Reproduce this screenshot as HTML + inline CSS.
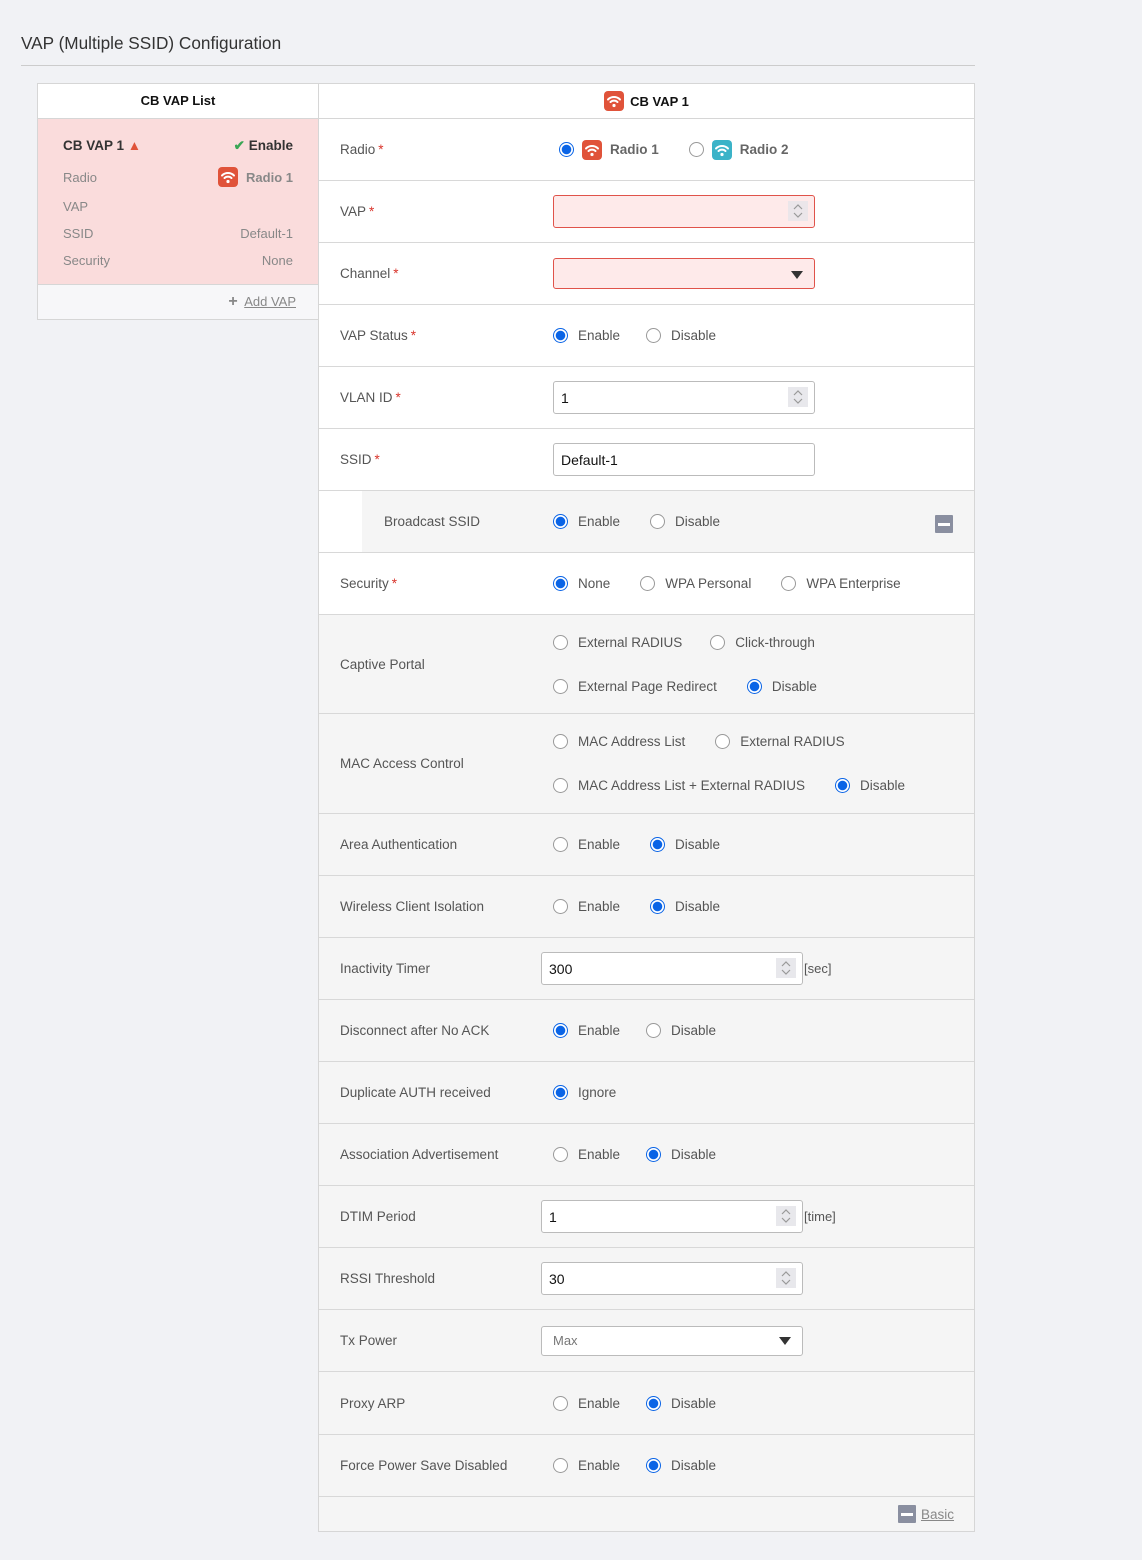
<!DOCTYPE html>
<html><head><meta charset="utf-8"><style>
*{box-sizing:border-box;margin:0;padding:0}
body{width:1142px;height:1560px;background:#f1f2f5;font-family:"Liberation Sans",sans-serif;font-size:14px;color:#555;position:relative;overflow:hidden}
.title{position:absolute;left:21px;top:33px;font-size:17.2px;color:#333}
.hr{position:absolute;left:21px;top:65px;width:954px;height:1px;background:#ccc}
.left{position:absolute;left:37px;top:83px;width:282px;height:237px;border:1px solid #d6d6d6;background:#fff}
.lh{height:35px;border-bottom:1px solid #d6d6d6;text-align:center;line-height:33px;font-weight:bold;color:#111;font-size:13px}
.pink{height:166px;background:#fadcdc;border-bottom:1px solid #d6d6d6;padding:0 25px;position:relative}
.pr{position:absolute;left:25px;right:25px;display:flex;justify-content:space-between;font-size:13px;color:#888}
.lf{height:34px;background:#f7f7f9;text-align:right;padding-right:22px;line-height:34px;color:#888;font-size:13px}
.right{position:absolute;left:318px;top:83px;width:657px;border:1px solid #d6d6d6;background:#fff}
.rh{height:35px;border-bottom:1px solid #d6d6d6;display:flex;justify-content:center;align-items:center;font-weight:bold;color:#111;font-size:13px;gap:6px}
.row{height:62px;border-bottom:1px solid #d8d8d8;position:relative}
.g{background:#f5f5f5}
.lab{position:absolute;left:21px;top:0;height:100%;display:flex;align-items:center;color:#555;font-size:13.5px}
.st{color:#d9342b;margin-left:3px}
.ctl{position:absolute;left:234px;top:0;height:100%;display:flex;align-items:center}
.r{display:inline-flex;align-items:center;margin-right:26px;color:#555;font-size:13.5px}
.r i{width:15px;height:15px;border:1px solid #999;border-radius:50%;display:inline-block;margin-right:10px;background:#fff}
.r i.on{border:1.5px solid #0a64e6;background:radial-gradient(circle,#0a64e6 0 4.5px,#fff 5px)}
.inp{width:262px;height:33px;border:1px solid #bbb;border-radius:3px;background:#fff;position:relative;display:flex;align-items:center;padding-left:7px;color:#111;font-size:14px}
.err{border-color:#e0534a;background:#feeaea}
.spin{position:absolute;right:6px;top:5px;width:20px;height:20px;background:#e8e8ec}
.arr{position:absolute;right:11px;top:12px;width:0;height:0;border-left:6px solid transparent;border-right:6px solid transparent;border-top:8px solid #333}
.wf{display:inline-block;width:20px;height:20px;border-radius:4px;background:#e0533a;vertical-align:middle}
.minus{display:inline-block;width:18px;height:18px;background:#8a8fa0;border-radius:1px;position:relative}
.minus:after{content:"";position:absolute;left:3px;right:3px;top:8px;height:3px;background:#fff}
u{color:#888}
</style></head><body>
<div class="title">VAP (Multiple SSID) Configuration</div>
<div class="hr"></div>
<svg width="0" height="0" style="position:absolute"><defs><symbol id="w" viewBox="0 0 20 20"><path d="M4 8.5a8.5 8.5 0 0 1 12 0M6.5 11a5 5 0 0 1 7 0" stroke="#fff" stroke-width="2" fill="none" stroke-linecap="round"/><circle cx="10" cy="14.5" r="1.6" fill="#fff"/></symbol>
<symbol id="sp" viewBox="0 0 20 20"><path d="M6 8l4-4 4 4M6 12l4 4 4-4" stroke="#999" stroke-width="1.2" fill="none"/></symbol></defs></svg>
<div class="left">
<div class="lh">CB VAP List</div>
<div class="pink">
<div class="pr" style="top:19px;font-size:13.5px;font-weight:bold;color:#333"><span>CB VAP 1 <span style="color:#e0533a">▲</span></span><span><span style="color:#3aa655">✔</span> Enable</span></div>
<div class="pr" style="top:48px;align-items:center"><span>Radio</span><span style="font-weight:bold;color:#888;display:flex;align-items:center;gap:8px"><svg class="wf" width="20" height="20"><use href="#w"/></svg>Radio 1</span></div>
<div class="pr" style="top:80px"><span>VAP</span></div>
<div class="pr" style="top:107px"><span>SSID</span><span>Default-1</span></div>
<div class="pr" style="top:134px"><span>Security</span><span>None</span></div>
</div>
<div class="lf"><span style="font-weight:bold;font-size:16px;color:#888">+</span>&nbsp; <u>Add VAP</u></div>
</div>
<div class="right">
<div class="rh"><svg class="wf" width="20" height="20"><use href="#w"/></svg>CB VAP 1</div>
<div class="row"><div class="lab">Radio<span class="st">*</span></div><div class="ctl" style="left:240px"><span class="r" style="margin-right:30px"><i class="on" style="margin-right:8px"></i><svg class="wf" width="20" height="20" style="margin-right:8px"><use href="#w"/></svg><b style="color:#666">Radio 1</b></span><span class="r"><i style="margin-right:8px"></i><svg class="wf" width="20" height="20" style="background:#3bb3c8;margin-right:8px"><use href="#w"/></svg><b style="color:#666">Radio 2</b></span></div></div>
<div class="row"><div class="lab">VAP<span class="st">*</span></div><div class="ctl"><div class="inp err"><svg class="spin" style="background:#ebe6ea"><use href="#sp"/></svg></div></div></div>
<div class="row"><div class="lab">Channel<span class="st">*</span></div><div class="ctl"><div class="inp err" style="height:31px"><div class="arr"></div></div></div></div>
<div class="row"><div class="lab">VAP Status<span class="st">*</span></div><div class="ctl"><span class="r"><i class="on"></i>Enable</span><span class="r"><i></i>Disable</span></div></div>
<div class="row"><div class="lab">VLAN ID<span class="st">*</span></div><div class="ctl"><div class="inp">1<svg class="spin"><use href="#sp"/></svg></div></div></div>
<div class="row"><div class="lab">SSID<span class="st">*</span></div><div class="ctl"><div class="inp">Default-1</div></div></div>
<div class="row"><div style="position:absolute;left:43px;right:0;top:0;bottom:0;background:#f5f5f5"></div><div class="lab" style="left:65px">Broadcast SSID</div><div class="ctl"><span class="r" style="margin-right:30px"><i class="on"></i>Enable</span><span class="r"><i></i>Disable</span></div><span class="minus" style="position:absolute;left:616px;top:24px"></span></div>
<div class="row"><div class="lab">Security<span class="st">*</span></div><div class="ctl"><span class="r" style="margin-right:30px"><i class="on"></i>None</span><span class="r" style="margin-right:30px"><i></i>WPA Personal</span><span class="r"><i></i>WPA Enterprise</span></div></div>
<div class="row g" style="height:99px"><div class="lab">Captive Portal</div>
<div class="ctl" style="top:-22px"><span class="r" style="margin-right:28px"><i></i>External RADIUS</span><span class="r"><i></i>Click-through</span></div>
<div class="ctl" style="top:22px"><span class="r" style="margin-right:30px"><i></i>External Page Redirect</span><span class="r"><i class="on"></i>Disable</span></div></div>
<div class="row g" style="height:100px"><div class="lab">MAC Access Control</div>
<div class="ctl" style="top:-22px"><span class="r" style="margin-right:30px"><i></i>MAC Address List</span><span class="r"><i></i>External RADIUS</span></div>
<div class="ctl" style="top:22px"><span class="r" style="margin-right:30px"><i></i>MAC Address List + External RADIUS</span><span class="r"><i class="on"></i>Disable</span></div></div>
<div class="row g"><div class="lab">Area Authentication</div><div class="ctl"><span class="r" style="margin-right:30px"><i></i>Enable</span><span class="r"><i class="on"></i>Disable</span></div></div>
<div class="row g"><div class="lab">Wireless Client Isolation</div><div class="ctl"><span class="r" style="margin-right:30px"><i></i>Enable</span><span class="r"><i class="on"></i>Disable</span></div></div>
<div class="row g"><div class="lab">Inactivity Timer</div><div class="ctl" style="left:222px"><div class="inp">300<svg class="spin"><use href="#sp"/></svg></div><span style="font-size:13px;margin-left:1px">[sec]</span></div></div>
<div class="row g"><div class="lab">Disconnect after No ACK</div><div class="ctl"><span class="r"><i class="on"></i>Enable</span><span class="r"><i></i>Disable</span></div></div>
<div class="row g"><div class="lab">Duplicate AUTH received</div><div class="ctl"><span class="r"><i class="on"></i>Ignore</span></div></div>
<div class="row g"><div class="lab">Association Advertisement</div><div class="ctl"><span class="r"><i></i>Enable</span><span class="r"><i class="on"></i>Disable</span></div></div>
<div class="row g"><div class="lab">DTIM Period</div><div class="ctl" style="left:222px"><div class="inp">1<svg class="spin"><use href="#sp"/></svg></div><span style="font-size:13px;margin-left:1px">[time]</span></div></div>
<div class="row g"><div class="lab">RSSI Threshold</div><div class="ctl" style="left:222px"><div class="inp">30<svg class="spin"><use href="#sp"/></svg></div></div></div>
<div class="row g"><div class="lab">Tx Power</div><div class="ctl" style="left:222px"><div class="inp" style="height:30px;padding-left:11px;color:#777;font-size:13px">Max<div class="arr" style="top:10px"></div></div></div></div>
<div class="row g" style="height:63px"><div class="lab">Proxy ARP</div><div class="ctl"><span class="r"><i></i>Enable</span><span class="r"><i class="on"></i>Disable</span></div></div>
<div class="row g"><div class="lab">Force Power Save Disabled</div><div class="ctl"><span class="r"><i></i>Enable</span><span class="r"><i class="on"></i>Disable</span></div></div>
<div class="g" style="height:34px;position:relative"><span class="minus" style="position:absolute;left:579px;top:8px"></span><u style="position:absolute;left:602px;top:10px;font-size:13.5px">Basic</u></div>
</div>
</body></html>
